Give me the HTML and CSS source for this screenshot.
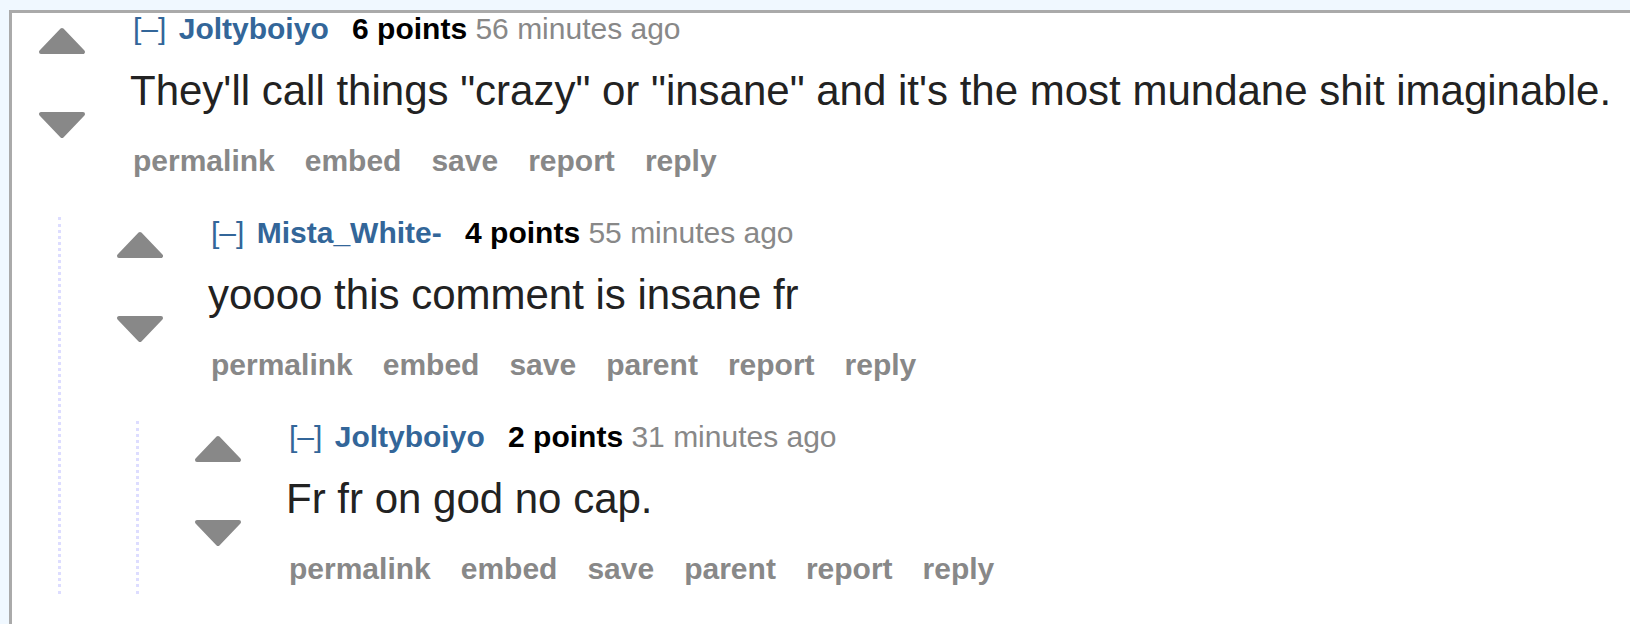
FILE: index.html
```html
<!DOCTYPE html>
<html lang="en">
<head>
    <meta charset="UTF-8">
    <meta name="viewport" content="width=device-width, initial-scale=1.0">
    <title>Comments</title>
    <link rel="stylesheet" href="styles.css">
</head>
<body>
    <div class="thread">
        <!-- Top level comment -->
        <div class="comment">
            <div class="comment-row">
                <div class="midcol">
                    <svg class="arrow up" width="48" height="27" viewBox="0 0 48 27"><polygon points="3,25 24,3 45,25"/></svg>
                    <svg class="arrow down" width="48" height="27" viewBox="0 0 48 27"><polygon points="3,2 45,2 24,24"/></svg>
                </div>
                <div class="entry">
                    <p class="tagline"><a class="expand">[–]</a> <a class="author">Joltyboiyo</a> <span class="score">6 points</span> <span class="time">56 minutes ago</span></p>
                    <div class="md">They'll call things "crazy" or "insane" and it's the most mundane shit imaginable.</div>
                    <ul class="buttons">
                        <li>permalink</li>
                        <li>embed</li>
                        <li>save</li>
                        <li>report</li>
                        <li>reply</li>
                    </ul>
                </div>
            </div>
            <div class="child">
                <!-- Reply -->
                <div class="comment">
                    <div class="comment-row">
                        <div class="midcol">
                            <svg class="arrow up" width="48" height="27" viewBox="0 0 48 27"><polygon points="3,25 24,3 45,25"/></svg>
                            <svg class="arrow down" width="48" height="27" viewBox="0 0 48 27"><polygon points="3,2 45,2 24,24"/></svg>
                        </div>
                        <div class="entry">
                            <p class="tagline"><a class="expand">[–]</a> <a class="author">Mista_White-</a> <span class="score">4 points</span> <span class="time">55 minutes ago</span></p>
                            <div class="md">yoooo this comment is insane fr</div>
                            <ul class="buttons">
                                <li>permalink</li>
                                <li>embed</li>
                                <li>save</li>
                                <li>parent</li>
                                <li>report</li>
                                <li>reply</li>
                            </ul>
                        </div>
                    </div>
                    <div class="child">
                        <!-- Reply to reply -->
                        <div class="comment">
                            <div class="comment-row">
                                <div class="midcol">
                                    <svg class="arrow up" width="48" height="27" viewBox="0 0 48 27"><polygon points="3,25 24,3 45,25"/></svg>
                                    <svg class="arrow down" width="48" height="27" viewBox="0 0 48 27"><polygon points="3,2 45,2 24,24"/></svg>
                                </div>
                                <div class="entry">
                                    <p class="tagline"><a class="expand">[–]</a> <a class="author">Joltyboiyo</a> <span class="score">2 points</span> <span class="time">31 minutes ago</span></p>
                                    <div class="md">Fr fr on god no cap.</div>
                                    <ul class="buttons">
                                        <li>permalink</li>
                                        <li>embed</li>
                                        <li>save</li>
                                        <li>parent</li>
                                        <li>report</li>
                                        <li>reply</li>
                                    </ul>
                                </div>
                            </div>
                        </div>
                    </div>
                </div>
            </div>
        </div>
    </div>
</body>
</html>
```

FILE: styles.css
```css
html, body {
    height: 100%;
    overflow: hidden;
}
body {
    font-family: "Liberation Sans", Arial, sans-serif;
    background-color: aliceblue;
    margin: 0;
    padding: 0;
}
.thread {
    margin: 10px 0 0 9px;
    min-height: 700px;
    background-color: #ffffff;
    border-top: 3px solid #aaaaaa;
    border-left: 3px solid #aaaaaa;
}
/* Comment layout */
.comment {
    padding-left: 26px;
}
.comment-row {
    display: flex;
    align-items: flex-start;
}
.midcol {
    width: 48px;
    margin-right: 44px;
    padding-top: 14px;
    display: flex;
    flex-direction: column;
}
.arrow {
    display: block;
    fill: #888888;
    stroke: #888888;
    stroke-width: 4;
    stroke-linejoin: round;
}
.arrow.down {
    margin-top: 58px;
}
.entry {
    padding-bottom: 7px;
}
.child {
    margin-top: 31px;
    margin-left: 20px;
    padding-left: 29px;
    border-left: 3px dotted #ddddff;
}
/* Tagline */
.tagline {
    margin: 0;
    padding-left: 3px;
    font-size: 30px;
    line-height: 32px;
    color: #888888;
    white-space: nowrap;
}
.expand {
    color: #336699;
    margin-right: 4px;
}
.author {
    color: #336699;
    font-weight: bold;
    margin-right: 15px;
}
.score {
    color: #000000;
    font-weight: bold;
}
/* Body text */
.md {
    margin-top: 22px;
    font-size: 42px;
    line-height: 48px;
    color: #222222;
    white-space: nowrap;
}
/* Action links */
.buttons {
    list-style: none;
    margin: 28px 0 0 0;
    padding: 0 0 0 3px;
    display: flex;
    gap: 30px;
    font-size: 30px;
    line-height: 36px;
    font-weight: bold;
    color: #888888;
}
```
